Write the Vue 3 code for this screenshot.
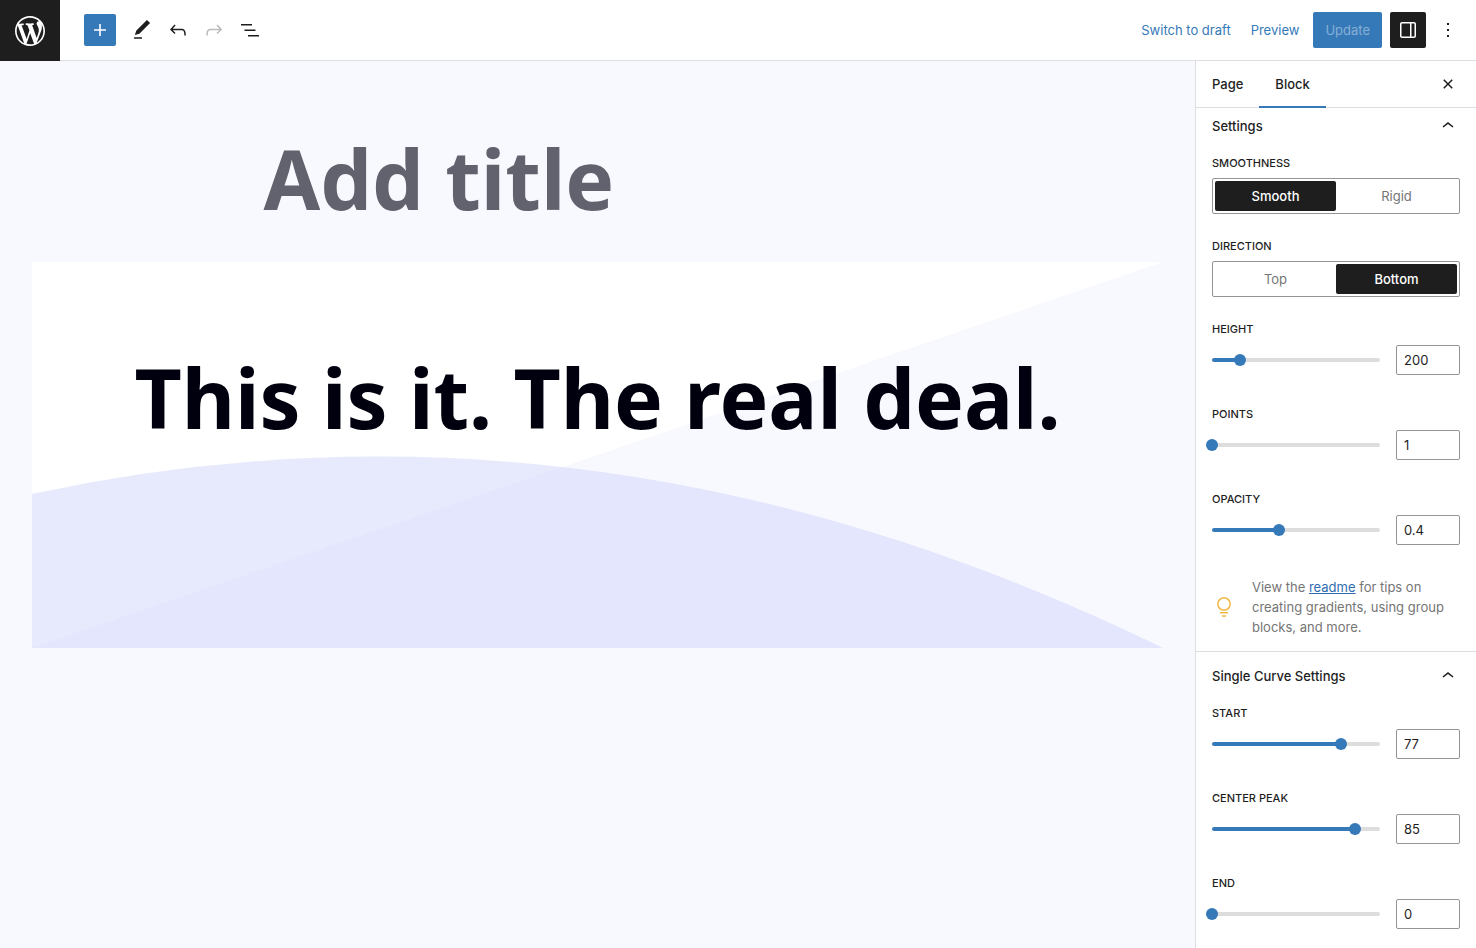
<script setup>
import { ref, reactive, computed } from 'vue'

const smoothness = ref('Smooth')
const direction = ref('Bottom')
const activeTab = ref('Block')

const toggles = [
  { label: 'Smoothness', options: ['Smooth', 'Rigid'], model: smoothness },
  { label: 'Direction', options: ['Top', 'Bottom'], model: direction },
]

const general = reactive([
  { id: 'height', label: 'Height', value: 200, min: 40, max: 1000, step: 1 },
  { id: 'points', label: 'Points', value: 1, min: 1, max: 10, step: 1 },
  { id: 'opacity', label: 'Opacity', value: 0.4, min: 0, max: 1, step: 0.1 },
])
const curve = reactive([
  { id: 'start', label: 'Start', value: 77, min: 0, max: 100, step: 1 },
  { id: 'peak', label: 'Center peak', value: 85, min: 0, max: 100, step: 1 },
  { id: 'end', label: 'End', value: 0, min: 0, max: 100, step: 1 },
])

const fill = (f) => ((f.value - f.min) / (f.max - f.min)) * 100 + '%'

const curvePath = computed(() => {
  const [start, peak, end] = curve.map((f) => Number(f.value))
  return `M0 ${200 - start * 2}Q50 ${94 - peak * 2} 100 ${200 - end * 2}V200H0Z`
})
</script>

<template>
  <div class="editor">
    <header class="topbar">
      <a class="home" href="#" aria-label="View pages">
        <svg width="36" height="36" viewBox="-2 -2 24 24"><path d="M20 10c0-5.51-4.49-10-10-10C4.48 0 0 4.49 0 10c0 5.52 4.48 10 10 10 5.51 0 10-4.48 10-10zM7.78 15.37L4.37 6.22c.55-.02 1.17-.08 1.17-.08.5-.06.44-1.13-.06-1.11 0 0-1.45.11-2.37.11-.18 0-.37 0-.58-.01C4.12 2.69 6.87 1.11 10 1.11c2.33 0 4.45.87 6.05 2.34-.68-.11-1.65.39-1.65 1.58 0 .74.45 1.36.9 2.1.35.61.55 1.36.55 2.46 0 1.49-1.4 5-1.4 5l-3.03-8.37c.54-.02.82-.17.82-.17.5-.05.44-1.25-.06-1.22 0 0-1.44.12-2.38.12-.87 0-2.33-.12-2.33-.12-.5-.03-.56 1.2-.06 1.22l.92.08 1.26 3.41zM17.41 10c.24-.64.74-1.87.43-4.25.7 1.29 1.05 2.71 1.05 4.25 0 3.29-1.73 6.24-4.4 7.78.97-2.59 1.94-5.2 2.92-7.78zM6.1 18.09C3.12 16.65 1.11 13.53 1.11 10c0-1.3.23-2.48.72-3.59C3.25 10.3 4.67 14.2 6.1 18.09zm4.03-6.63l2.58 6.98c-.86.29-1.76.45-2.71.45-.79 0-1.57-.11-2.29-.33.81-2.38 1.62-4.74 2.42-7.1z" /></svg>
      </a>
      <div class="tools">
        <button class="insert" type="button" aria-label="Toggle block inserter">
          <svg width="24" height="24" viewBox="0 0 24 24"><path d="M18 11.2h-5.2V6h-1.6v5.2H6v1.6h5.2V18h1.6v-5.2H18z" /></svg>
        </button>
        <button class="icon" type="button" aria-label="Tools">
          <svg width="24" height="24" viewBox="0 0 24 24"><path d="M20.1 5.1L16.9 2 6.2 12.7l-1.3 4.4 4.5-1.3L20.1 5.1zM4 20.8h8v-1.5H4v1.5z" /></svg>
        </button>
        <button class="icon" type="button" aria-label="Undo">
          <svg width="24" height="24" viewBox="0 0 24 24"><path d="M18.3 11.7c-.6-.6-1.4-.9-2.3-.9H6.7l2.9-3.3-1.1-1-4.5 5L8.5 16l1-1-2.7-2.7H16c.5 0 .9.2 1.3.5 1 1 1 3.4 1 4.5v.3h1.5v-.2c0-1.5 0-4.3-1.5-5.7z" /></svg>
        </button>
        <button class="icon" type="button" aria-label="Redo" disabled>
          <svg width="24" height="24" viewBox="0 0 24 24"><path d="M15.6 6.5l-1.1 1 2.9 3.3H8c-.9 0-1.7.3-2.3.9-1.4 1.5-1.4 4.2-1.4 5.6v.2h1.5v-.3c0-1.1 0-3.5 1-4.5.3-.3.7-.5 1.3-.5h9.2L14.5 15l1.1 1.1 4.6-4.6-4.6-5z" /></svg>
        </button>
        <button class="icon" type="button" aria-label="List view">
          <svg width="24" height="24" viewBox="0 0 24 24"><path d="M3 6h11v1.5H3V6Zm3.5 5.5h11V13h-11v-1.5ZM21 17H10v1.5h11V17Z" /></svg>
        </button>
      </div>
      <div class="actions">
        <button class="link" type="button">Switch to draft</button>
        <button class="link" type="button">Preview</button>
        <button class="update" type="button" disabled>Update</button>
        <button class="drawer" type="button" aria-label="Settings" aria-pressed="true">
          <svg width="24" height="24" viewBox="0 0 24 24"><path d="M18 4H6c-1.1 0-2 .9-2 2v12c0 1.1.9 2 2 2h12c1.1 0 2-.9 2-2V6c0-1.1-.9-2-2-2zm-4 14.5H6c-.3 0-.5-.2-.5-.5V6c0-.3.2-.5.5-.5h8v13zm4.5-.5c0 .3-.2.5-.5.5h-2.5v-13H18c.3 0 .5.2.5.5v12z" /></svg>
        </button>
        <button class="icon" type="button" aria-label="Options">
          <svg width="24" height="24" viewBox="0 0 24 24"><path d="M13 19h-2v-2h2v2zm0-6h-2v-2h2v2zm0-6h-2V5h2v2z" /></svg>
        </button>
      </div>
    </header>

    <div class="body">
      <main class="canvas">
        <h1 class="title" contenteditable="true" spellcheck="false">Add title</h1>
        <section class="hero">
          <h2 class="headline">This is it. The real deal.</h2>
          <svg class="curve" viewBox="0 0 100 200" preserveAspectRatio="none" aria-hidden="true"><path :d="curvePath" /></svg>
        </section>
      </main>

      <aside class="sidebar">
        <div class="tabs">
          <button v-for="tab in ['Page', 'Block']" :key="tab" type="button" class="tab" :class="{ active: activeTab === tab }" @click="activeTab = tab">{{ tab }}</button>
          <button class="icon close" type="button" aria-label="Close settings">
            <svg width="24" height="24" viewBox="0 0 24 24"><path d="M12 13.06l3.712 3.713 1.061-1.06L13.061 12l3.712-3.712-1.06-1.06L12 10.938 8.288 7.227l-1.061 1.06L10.939 12l-3.712 3.712 1.06 1.061L12 13.061z" /></svg>
          </button>
        </div>

        <section class="panel first">
          <button class="panel-title" type="button" aria-expanded="true">
            Settings
            <svg width="24" height="24" viewBox="0 0 24 24"><path d="M6.5 12.4L12 8l5.5 4.4-.9 1.2L12 10l-4.5 3.6-1-1.2z" /></svg>
          </button>
          <div v-for="t in toggles" :key="t.label" class="field toggle-field" role="group" :aria-label="t.label">
            <span class="label">{{ t.label }}</span>
            <div class="toggle">
              <button v-for="o in t.options" :key="o" type="button" :class="{ on: t.model.value === o }" :aria-pressed="t.model.value === o" @click="t.model.value = o">{{ o }}</button>
            </div>
          </div>
          <div v-for="f in general" :key="f.id" class="field">
            <label class="label" :for="f.id">{{ f.label }}</label>
            <div class="row">
              <div class="slider" :style="{ '--fill': fill(f) }">
                <input :id="f.id" v-model.number="f.value" type="range" :min="f.min" :max="f.max" :step="f.step">
              </div>
              <input v-model.number="f.value" class="number" type="number" :aria-label="f.label + ' value'" :min="f.min" :max="f.max" :step="f.step">
            </div>
          </div>
          <div class="tip">
            <svg width="24" height="24" viewBox="0 0 24 24" fill="none" stroke="#f0b849" stroke-width="1.5"><circle cx="12" cy="9" r="6.2" /><path d="M8 17.8h8M10 20.9h4" /></svg>
            <p>View the <a href="#">readme</a> for tips on creating gradients, using group blocks, and more.</p>
          </div>
        </section>

        <section class="panel">
          <button class="panel-title" type="button" aria-expanded="true">
            Single Curve Settings
            <svg width="24" height="24" viewBox="0 0 24 24"><path d="M6.5 12.4L12 8l5.5 4.4-.9 1.2L12 10l-4.5 3.6-1-1.2z" /></svg>
          </button>
          <div v-for="f in curve" :key="f.id" class="field">
            <label class="label" :for="f.id">{{ f.label }}</label>
            <div class="row">
              <div class="slider" :style="{ '--fill': fill(f) }">
                <input :id="f.id" v-model.number="f.value" type="range" :min="f.min" :max="f.max" :step="f.step">
              </div>
              <input v-model.number="f.value" class="number" type="number" :aria-label="f.label + ' value'" :min="f.min" :max="f.max" :step="f.step">
            </div>
          </div>
        </section>
      </aside>
    </div>
  </div>
</template>

<style>
body {
  background: #f8f9fe;
}
</style>

<style scoped>
.editor,
.editor * {
  box-sizing: border-box;
}
.editor {
  display: flex;
  flex-direction: column;
  height: 100vh;
  font: 400 13px/20px Inter, "Liberation Sans", sans-serif;
  color: #1e1e1e;
}
svg {
  display: block;
  fill: currentColor;
}
button {
  margin: 0;
  padding: 0;
  border: 0;
  background: none;
  color: inherit;
  font: inherit;
  cursor: pointer;
}

.topbar {
  display: flex;
  align-items: center;
  flex: none;
  height: 61px;
  padding-bottom: 1px;
  background: #fff;
  box-shadow: inset 0 -1px #dddee0;
}
.home {
  display: grid;
  place-items: center;
  width: 60px;
  height: 61px;
  margin-bottom: -1px;
  background: #1e1e1e;
  color: #fff;
}
.tools {
  display: flex;
  align-items: center;
  margin-left: 24px;
}
.insert {
  display: grid;
  place-items: center;
  width: 32px;
  height: 32px;
  margin-right: 8px;
  border-radius: 2px;
  background: #3579b8;
  color: #fff;
}
.icon {
  display: grid;
  place-items: center;
  width: 36px;
  height: 36px;
}
.icon:disabled {
  color: #bbb;
}
.actions {
  display: flex;
  align-items: center;
  margin-left: auto;
  padding-right: 10px;
}
.link {
  padding: 0 10px;
  color: #3579b8;
}
.update {
  height: 36px;
  margin: 0 8px 0 4px;
  padding: 0 12px;
  border-radius: 2px;
  background: #3579b8;
  color: #86afd4;
}
.drawer {
  display: grid;
  place-items: center;
  width: 36px;
  height: 36px;
  margin-right: 4px;
  border-radius: 2px;
  background: #1e1e1e;
  color: #fff;
}

.body {
  display: flex;
  flex: 1;
  min-height: 0;
}
.canvas {
  flex: 1;
  min-width: 0;
  padding: 61px 32px;
  background: #f8f9fe;
  overflow: auto;
}
.title,
.headline {
  margin: 0;
  font: 700 82px/112px "Noto Sans", "Open Sans", sans-serif;
}
.title {
  max-width: 668px;
  margin: 0 auto 28px;
  color: #61626d;
  outline: 0;
}
.hero {
  display: flex;
  flex-direction: column;
  padding-top: 79px;
  background: linear-gradient(to bottom right, #fff 50%, #f8f9fe 50%);
}
.headline {
  color: #01000f;
  text-align: center;
}
.curve {
  width: 100%;
  height: 200px;
  margin-top: -5px;
  fill: #c4cafa;
  opacity: 0.4;
}

.sidebar {
  flex: none;
  width: 281px;
  border-left: 1px solid #dddee0;
  background: #fff;
  overflow: hidden auto;
}
.tabs {
  display: flex;
  height: 47px;
  box-shadow: inset 0 -1px #dddee0;
}
.tab {
  padding: 0 16px 1px;
  font-weight: 500;
}
.tab.active {
  box-shadow: inset 0 -2px #3579b8;
}
.close {
  margin: 5px 10px 0 auto;
}
.panel {
  padding: 8px 16px 14px;
  border-bottom: 1px solid #dddee0;
}
.panel.first {
  padding-top: 2px;
}
.panel:last-child {
  border-bottom: 0;
}
.panel-title {
  display: flex;
  align-items: center;
  justify-content: space-between;
  width: 100%;
  height: 32px;
  margin-bottom: 14px;
  font-weight: 500;
}
.field {
  margin-bottom: 31px;
}
.toggle-field {
  margin-bottom: 25px;
}
.field:last-child {
  margin-bottom: 0;
}
.label {
  display: block;
  margin-bottom: 7px;
  font-size: 11px;
  font-weight: 500;
  line-height: 15px;
  text-transform: uppercase;
}
.toggle {
  display: flex;
  height: 36px;
  padding: 2px;
  border: 1px solid #949494;
  border-radius: 2px;
}
.toggle button {
  flex: 1;
  border-radius: 2px;
  color: #757575;
}
.toggle .on {
  background: #1e1e1e;
  color: #fff;
  font-weight: 500;
}
.row {
  display: flex;
  align-items: center;
  gap: 16px;
  height: 32px;
}
.slider {
  flex: 1;
  display: flex;
  align-items: center;
  position: relative;
  height: 30px;
}
.slider::before {
  content: "";
  position: absolute;
  inset: 13px 0;
  border-radius: 4px;
  background: linear-gradient(to right, #3579b8 var(--fill), #ddd var(--fill));
}
.slider input {
  appearance: none;
  position: relative;
  flex: 1;
  min-width: 0;
  height: 12px;
  margin: 0 -6px;
  background: none;
}
.slider input::-webkit-slider-thumb {
  appearance: none;
  width: 12px;
  height: 12px;
  border-radius: 50%;
  background: #3579b8;
}
.number {
  appearance: textfield;
  width: 64px;
  height: 30px;
  padding: 0 7px;
  border: 1px solid #949494;
  border-radius: 2px;
  background: #fff;
  color: #1e1e1e;
  font: inherit;
}
.number::-webkit-inner-spin-button {
  appearance: none;
  margin: 0;
}
.tip {
  display: flex;
  align-items: center;
  gap: 16px;
}
.tip svg {
  flex: none;
  fill: none;
}
.tip p {
  margin: 0;
  color: #757575;
}
.tip a {
  color: #2f6db0;
}
</style>
